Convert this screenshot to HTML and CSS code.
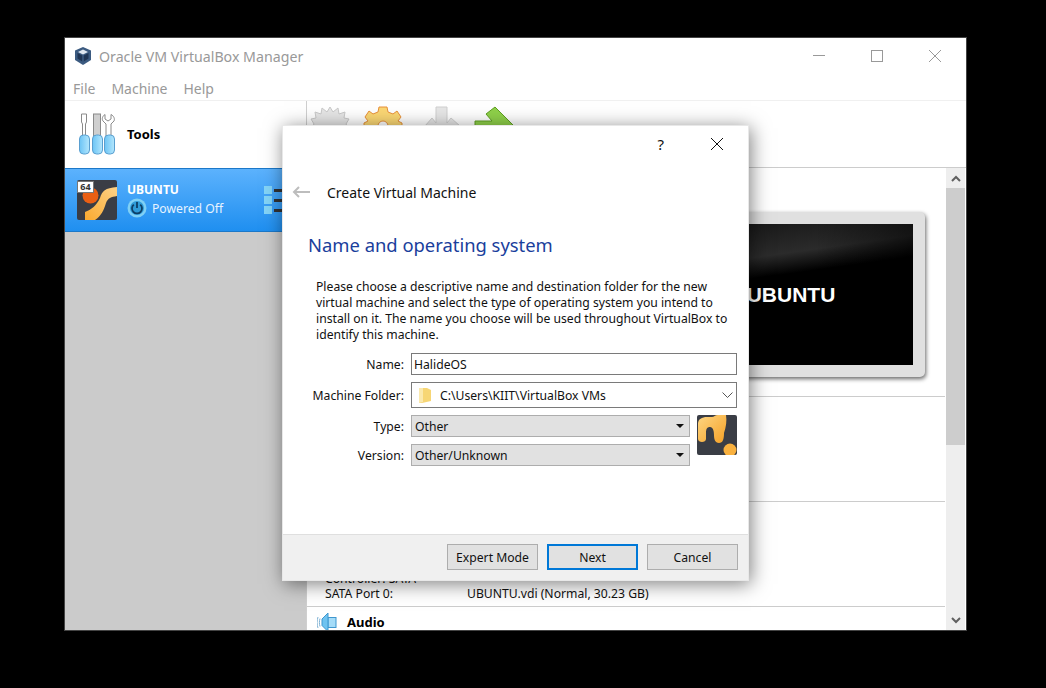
FILE: index.html
```html
<!DOCTYPE html>
<html lang="en">
<head>
    <meta charset="UTF-8">
    <meta name="viewport" content="width=device-width, initial-scale=1.0">
    <title>Oracle VM VirtualBox Manager</title>
    <link rel="stylesheet" href="styles.css">
</head>
<body>

<div class="window">
    <div class="titlebar">
        <svg class="app-logo" width="18" height="18" viewBox="0 0 18 18">
            <path d="M9 0 L17 3.5 V13 L9 18 L1 13 V3.5 Z" fill="#3b5a80"/>
            <path d="M9 2.5 L14 5 L9 7.6 L4 5 Z" fill="#dfe7f0"/>
            <path d="M3.5 6 L8.2 8.6 V14.5 L3.5 11.6 Z" fill="#1f3554"/>
            <path d="M14.5 6 L9.8 8.6 V14.5 L14.5 11.6 Z" fill="#1f3554"/>
        </svg>
        <span class="app-title">Oracle VM VirtualBox Manager</span>
        <div class="controls">
            <svg width="12" height="12" viewBox="0 0 12 12"><path d="M0 5.5 H12" stroke="#999" fill="none"/></svg>
            <svg width="12" height="12" viewBox="0 0 12 12"><rect x="0.5" y="0.5" width="11" height="11" stroke="#999" fill="none"/></svg>
            <svg width="12" height="12" viewBox="0 0 12 12"><path d="M0 0 L12 12 M12 0 L0 12" stroke="#999" fill="none"/></svg>
        </div>
    </div>

    <div class="menubar">
        <span>File</span>
        <span>Machine</span>
        <span>Help</span>
    </div>

    <div class="main">
        <div class="sidebar">
            <div class="tools-row">
                <svg width="38" height="42" viewBox="0 0 38 42">
                    <defs>
                        <linearGradient id="handle" x1="0" y1="0" x2="1" y2="0">
                            <stop offset="0" stop-color="#6cc4f5"/>
                            <stop offset="1" stop-color="#b4e7fd"/>
                        </linearGradient>
                    </defs>
                    <path d="M2.5 1 H7.5 V9 L6.5 11 V23 H3.5 V11 L2.5 9 Z" fill="#fff" stroke="#8a8a8a"/>
                    <rect x="14.5" y="1" width="7" height="22" fill="#cfcfcf" stroke="#8a8a8a"/>
                    <path d="M26 1.5 V6 L29 8 L32 6 V1.5 C35 3 36 6 35 8 L32 11 V23 H27 V11 L24 8 C22.5 6 23.5 3 26 1.5 Z" fill="#fff" stroke="#8a8a8a"/>
                    <rect x="0.5" y="22" width="10" height="19" rx="4" fill="url(#handle)" stroke="#5a9fd0"/>
                    <rect x="13.5" y="22" width="10" height="19" rx="4" fill="url(#handle)" stroke="#5a9fd0"/>
                    <rect x="25.5" y="22" width="10" height="19" rx="4" fill="url(#handle)" stroke="#5a9fd0"/>
                </svg>
                <span class="tools-label">Tools</span>
            </div>

            <div class="vm-row">
                <div class="vm-icon">
                    <svg width="40" height="40" viewBox="0 0 40 40">
                        <defs>
                            <linearGradient id="wave" x1="0" y1="1" x2="1" y2="0">
                                <stop offset="0" stop-color="#fba92f"/>
                                <stop offset="1" stop-color="#fdd287"/>
                            </linearGradient>
                        </defs>
                        <rect width="40" height="40" rx="2" fill="#3a3d45"/>
                        <path d="M8 40 V32 C14 30 20 25 23 18 C25 11 28 8 40 7 V16 C34 17 31 18 29 23 C27 30 24 36 18 40 Z" fill="url(#wave)"/>
                        <circle cx="13.5" cy="15.5" r="8" fill="#ea5f14"/>
                    </svg>
                    <span class="badge">64</span>
                </div>
                <div class="vm-info">
                    <div class="vm-name">UBUNTU</div>
                    <div class="vm-state">
                        <svg width="20" height="20" viewBox="0 0 20 20">
                            <circle cx="10" cy="10" r="9.5" fill="#7fd0f5"/>
                            <circle cx="10" cy="10" r="7" fill="#2f9bd8"/>
                            <path d="M6.8 6.6 A5 5 0 1 0 13.2 6.6 M10 4 V10" fill="none" stroke="#0d3e66" stroke-width="1.8"/>
                        </svg>
                        <span>Powered Off</span>
                    </div>
                </div>
                <div class="vm-menu">
                    <i></i><i></i><i></i>
                </div>
            </div>
        </div>

        <div class="content">
            <div class="toolbar">
                <svg width="40" height="40" viewBox="0 0 40 40">
                    <path d="M20 1 L23 6 L28 2 L29 8 L35 6 L34 12 L39 13 L36 18 L39 23 L34 26 L34 38 H6 V26 L1 23 L4 18 L1 13 L6 12 L5 6 L11 8 L12 2 L17 6 Z" fill="#e6e6e6" stroke="#c9c9c9"/>
                </svg>
                <svg width="40" height="40" viewBox="0 0 40 40">
                    <path d="M16 1 H24 L25 6 L30 8 L34 5 L38 11 L35 15 L39 17 V25 H1 V17 L5 15 L2 11 L6 5 L10 8 L15 6 Z" fill="#fbd774" stroke="#e8913a"/>
                    <circle cx="20" cy="20" r="5" fill="#fff" stroke="#e8913a"/>
                </svg>
                <svg class="tool-down" width="37" height="40" viewBox="0 0 37 40">
                    <path d="M12 1 H23 V17 L27 12 L36 20 V38 H1 V20 L8 12 L12 17 Z" fill="#e6e6e6" stroke="#cfcfcf"/>
                </svg>
                <svg width="40" height="40" viewBox="0 0 40 40">
                    <path d="M1 15 H18 L12 8 L21 1 L39 19 L21 37 H1 Z" fill="#8fd14a" stroke="#5f9e22"/>
                </svg>
            </div>

            <div class="details">
                <div class="sections">
                    <div class="section section-preview">
                        <div class="monitor">
                            <div class="screen">UBUNTU</div>
                        </div>
                    </div>
                    <div class="section section-blank"></div>
                    <div class="section section-storage">
                        <div class="storage-line">Controller: SATA</div>
                        <div class="storage-line">
                            <span class="storage-key">SATA Port 0:</span>
                            <span>UBUNTU.vdi (Normal, 30.23 GB)</span>
                        </div>
                    </div>
                    <div class="section-audio">
                        <svg width="20" height="20" viewBox="0 0 20 20">
                            <rect x="11" y="5.5" width="8" height="10" fill="#a5dcf8" stroke="#3f97cf"/>
                            <path d="M5 7 L11 1 V19.5 L5 13.5 Z" fill="#6fc3f0" stroke="#3f97cf"/>
                            <path d="M3 6.5 C2.2 9 2.2 12 3 14.5 M1 5 C-0.2 8.5 -0.2 12.5 1 16" fill="none" stroke="#7fb2d4"/>
                        </svg>
                        <span>Audio</span>
                    </div>
                </div>

                <div class="scrollbar">
                    <div class="scroll-btn">
                        <svg width="10" height="7" viewBox="0 0 10 7"><path d="M1 6 L5 2 L9 6" fill="none" stroke="#606060" stroke-width="2"/></svg>
                    </div>
                    <div class="scroll-thumb"></div>
                    <div class="scroll-track"></div>
                    <div class="scroll-btn">
                        <svg width="10" height="7" viewBox="0 0 10 7"><path d="M1 1 L5 5 L9 1" fill="none" stroke="#606060" stroke-width="2"/></svg>
                    </div>
                </div>
            </div>
        </div>
    </div>

    <div class="dialog">
        <div class="dialog-top">
            <span class="help-mark">?</span>
            <svg width="12" height="12" viewBox="0 0 12 12"><path d="M0 0 L12 12 M12 0 L0 12" stroke="#111" fill="none"/></svg>
        </div>

        <div class="dialog-head">
            <svg width="18" height="12" viewBox="0 0 18 12"><path d="M18 6 H2 M7 1 L2 6 L7 11" fill="none" stroke="#bdbdbd" stroke-width="2"/></svg>
            <span>Create Virtual Machine</span>
        </div>

        <h2 class="page-title">Name and operating system</h2>

        <p class="intro">
            Please choose a descriptive name and destination folder for the new<br>
            virtual machine and select the type of operating system you intend to<br>
            install on it. The name you choose will be used throughout VirtualBox to<br>
            identify this machine.
        </p>

        <div class="form">
            <label>Name:</label>
            <div class="field field-name">HalideOS</div>

            <label>Machine Folder:</label>
            <div class="field field-folder">
                <svg width="12" height="16" viewBox="0 0 12 16">
                    <path d="M0 1 H8 L12 3 V14 L3 16 H0 Z" fill="#f7d675"/>
                    <path d="M0 1 H4 V15 L0 16 Z" fill="#fbe9ae"/>
                </svg>
                <span>C:\Users\KIIT\VirtualBox VMs</span>
                <svg class="chevron" width="11" height="6" viewBox="0 0 11 6"><path d="M0.5 0.5 L5.5 5.5 L10.5 0.5" fill="none" stroke="#555"/></svg>
            </div>

            <label>Type:</label>
            <div class="select">Other</div>

            <label class="version-label">Version:</label>
            <div class="select version-select">Other/Unknown</div>

            <svg class="os-icon" width="40" height="40" viewBox="0 0 40 40">
                <defs>
                    <linearGradient id="os-wave" x1="0" y1="0" x2="1" y2="1">
                        <stop offset="0" stop-color="#fdd683"/>
                        <stop offset="1" stop-color="#f5a025"/>
                    </linearGradient>
                    <clipPath id="os-clip"><rect width="40" height="40" rx="2"/></clipPath>
                </defs>
                <g clip-path="url(#os-clip)">
                    <rect width="40" height="40" fill="#3a3d45"/>
                    <path d="M1 24 V9 C1 4 5 2 10 2 H15 C17 2 18 0 21 0 H29 C30 6 29 12 27 18 C27 24 26 28 22 28 C18 28 17 24 17 20 C17 16 16 12 13 12 C10 12 9 14 9 18 V24 C9 28 1 28 1 24 Z" fill="url(#os-wave)"/>
                    <circle cx="33" cy="35" r="6.5" fill="#f9b13f"/>
                </g>
            </svg>
        </div>

        <div class="dialog-footer">
            <button>Expert Mode</button>
            <button class="primary">Next</button>
            <button>Cancel</button>
        </div>
    </div>
</div>

</body>
</html>
```

FILE: styles.css
```css
* {
    box-sizing: border-box;
}

body {
    margin: 0;
    height: 688px;
    background-color: #000;
    font-family: "Noto Sans", sans-serif;
    font-size: 12.2px;
    color: #111;
    overflow: hidden;
}

.window {
    position: relative;
    width: 903px;
    height: 594px;
    margin: 37px 0 0 64px;
    background-color: #fff;
    border: 1px solid #444;
    display: flex;
    flex-direction: column;
}

.titlebar {
    height: 37px;
    display: flex;
    align-items: center;
    padding: 0 25px 1px 9px;
    flex-shrink: 0;
}

.app-logo {
    margin-right: 7px;
}

.app-title {
    font-size: 14.2px;
    color: #999;
}

.controls {
    margin-left: auto;
    display: flex;
    gap: 46px;
}

.menubar {
    height: 26px;
    display: flex;
    align-items: center;
    gap: 16px;
    padding: 2px 0 0 8px;
    font-size: 14px;
    color: #999;
    border-bottom: 1px solid #f0f0f0;
    flex-shrink: 0;
}

.main {
    flex: 1;
    display: flex;
    min-height: 0;
}

.sidebar {
    width: 242px;
    background-color: #cbcbcb;
    border-right: 1px solid #cfcfcf;
    flex-shrink: 0;
}

.tools-row {
    height: 67px;
    background-color: #fff;
    display: flex;
    align-items: center;
    padding: 0 0 2px 14px;
    gap: 10px;
}

.tools-label {
    font-size: 13px;
    font-weight: bold;
    color: #000;
}

.vm-row {
    height: 64px;
    background: linear-gradient(#5cb2fd, #1f8ff0);
    border-top: 1px solid #1c78c8;
    border-bottom: 1px solid #1c78c8;
    display: flex;
    align-items: center;
    padding: 0 24px 0 12px;
    color: #fff;
}

.vm-icon {
    position: relative;
    width: 40px;
    height: 40px;
}

.vm-icon svg {
    display: block;
}

.badge {
    position: absolute;
    left: 0;
    top: 1px;
    width: 17px;
    height: 12px;
    background-color: #fff;
    border: 1px solid #777;
    color: #333;
    font-size: 9px;
    font-weight: bold;
    line-height: 10px;
    text-align: center;
}

.vm-info {
    margin-left: 10px;
}

.vm-name {
    font-size: 12px;
    font-weight: bold;
    line-height: 16px;
}

.vm-state {
    display: flex;
    align-items: center;
    gap: 5px;
    color: #e6f3ff;
}

.vm-menu {
    margin-left: auto;
    width: 18px;
    display: flex;
    flex-direction: column;
    gap: 2px;
}

.vm-menu i {
    display: block;
    width: 18px;
    height: 8px;
    background:
        linear-gradient(#84d4f7, #84d4f7) left center / 8px 8px no-repeat,
        linear-gradient(#333, #333) right center / 8px 3px no-repeat;
}

.content {
    flex: 1;
    display: flex;
    flex-direction: column;
    min-width: 0;
}

.toolbar {
    height: 67px;
    display: flex;
    align-items: flex-start;
    gap: 13px;
    padding: 5px 0 0 3px;
    border-bottom: 1px solid #ccc;
    flex-shrink: 0;
    overflow: hidden;
}

.tool-down {
    margin-left: 8px;
}

.details {
    flex: 1;
    display: flex;
    min-height: 0;
}

.sections {
    flex: 1;
    min-width: 0;
    overflow: hidden;
}

.section {
    border-bottom: 1px solid #ccc;
}

.section-preview {
    height: 229px;
    padding: 44px 20px 0 0;
    display: flex;
    justify-content: flex-end;
    align-items: flex-start;
}

.monitor {
    width: 268px;
    height: 165px;
    padding: 12px;
    background-color: #e0e0e0;
    border-radius: 5px;
    box-shadow: 1px 2px 4px rgba(0, 0, 0, 0.6);
}

.screen {
    height: 141px;
    display: flex;
    align-items: center;
    justify-content: center;
    background:
        linear-gradient(to right, transparent 60%, rgba(0, 0, 0, 0.55) 100%),
        linear-gradient(172deg, #131313 0%, #2b2b2b 26%, #000 38%);
    color: #fff;
    font-family: "Liberation Sans", sans-serif;
    font-size: 21px;
    font-weight: bold;
}

.section-blank {
    height: 105px;
}

.section-storage {
    height: 105px;
    padding: 69px 0 0 18px;
}

.storage-line {
    height: 15px;
    display: flex;
    align-items: center;
}

.storage-key {
    width: 142px;
}

.section-audio {
    height: 24px;
    display: flex;
    align-items: center;
    gap: 10px;
    padding: 6px 0 0 10px;
    font-size: 13px;
    font-weight: bold;
    color: #000;
}

.scrollbar {
    width: 19px;
    margin: 0 1px;
    display: flex;
    flex-direction: column;
    background-color: #eee;
    flex-shrink: 0;
}

.scroll-btn {
    height: 20px;
    display: flex;
    align-items: center;
    justify-content: center;
}

.scroll-thumb {
    height: 257px;
    background-color: #cdcdcd;
}

.scroll-track {
    flex: 1;
}

/* dialog floats over the manager window */
.dialog {
    position: absolute;
    left: 217px;
    top: 87px;
    width: 467px;
    height: 456px;
    background-color: #fff;
    border: 1px solid #e8e8e8;
    box-shadow: 2px 3px 18px rgba(0, 0, 0, 0.5);
    display: flex;
    flex-direction: column;
}

.dialog-top {
    height: 35px;
    display: flex;
    align-items: center;
    justify-content: flex-end;
    gap: 47px;
    padding: 0 25px 0 0;
}

.help-mark {
    font-size: 15px;
}

.dialog-head {
    display: flex;
    align-items: center;
    gap: 17px;
    height: 22px;
    margin-top: 20px;
    padding-left: 9px;
    font-size: 14px;
}

.page-title {
    margin: 29px 0 0 25px;
    font-size: 18.4px;
    line-height: 26px;
    font-weight: normal;
    color: #1a3e9c;
}

.intro {
    margin: 21px 0 0 33px;
    line-height: 16px;
}

.form {
    position: relative;
    margin-top: 10px;
    display: grid;
    grid-template-columns: 121px 326px;
    column-gap: 7px;
    align-items: center;
}

.form label {
    text-align: right;
}

.field {
    height: 22px;
    border: 1px solid #7a7a7a;
    display: flex;
    align-items: center;
    padding-left: 2px;
}

.field-folder {
    height: 26px;
    margin: 7px 0;
    padding-left: 7px;
    gap: 9px;
}

.chevron {
    margin-left: auto;
    margin-right: 3px;
}

.select {
    position: relative;
    width: 279px;
    height: 22px;
    display: flex;
    align-items: center;
    padding-left: 3px;
    background-color: #e1e1e1;
    border: 1px solid #adadad;
}

.select::after {
    content: "";
    position: absolute;
    right: 5px;
    top: 8px;
    border-left: 4px solid transparent;
    border-right: 4px solid transparent;
    border-top: 4px solid #111;
}

.version-label,
.version-select {
    margin-top: 7px;
}

.os-icon {
    position: absolute;
    left: 414px;
    top: 62px;
}

.dialog-footer {
    margin-top: auto;
    height: 46px;
    background-color: #f0f0f0;
    border-top: 1px solid #dfdfdf;
    display: flex;
    align-items: flex-start;
    justify-content: flex-end;
    gap: 9px;
    padding: 9px 10px 0 0;
}

.dialog-footer button {
    width: 91px;
    height: 26px;
    background-color: #e1e1e1;
    border: 1px solid #adadad;
    font-family: inherit;
    font-size: 12.2px;
    color: #111;
    padding: 0;
}

.dialog-footer .primary {
    border: 2px solid #0078d7;
}
```
